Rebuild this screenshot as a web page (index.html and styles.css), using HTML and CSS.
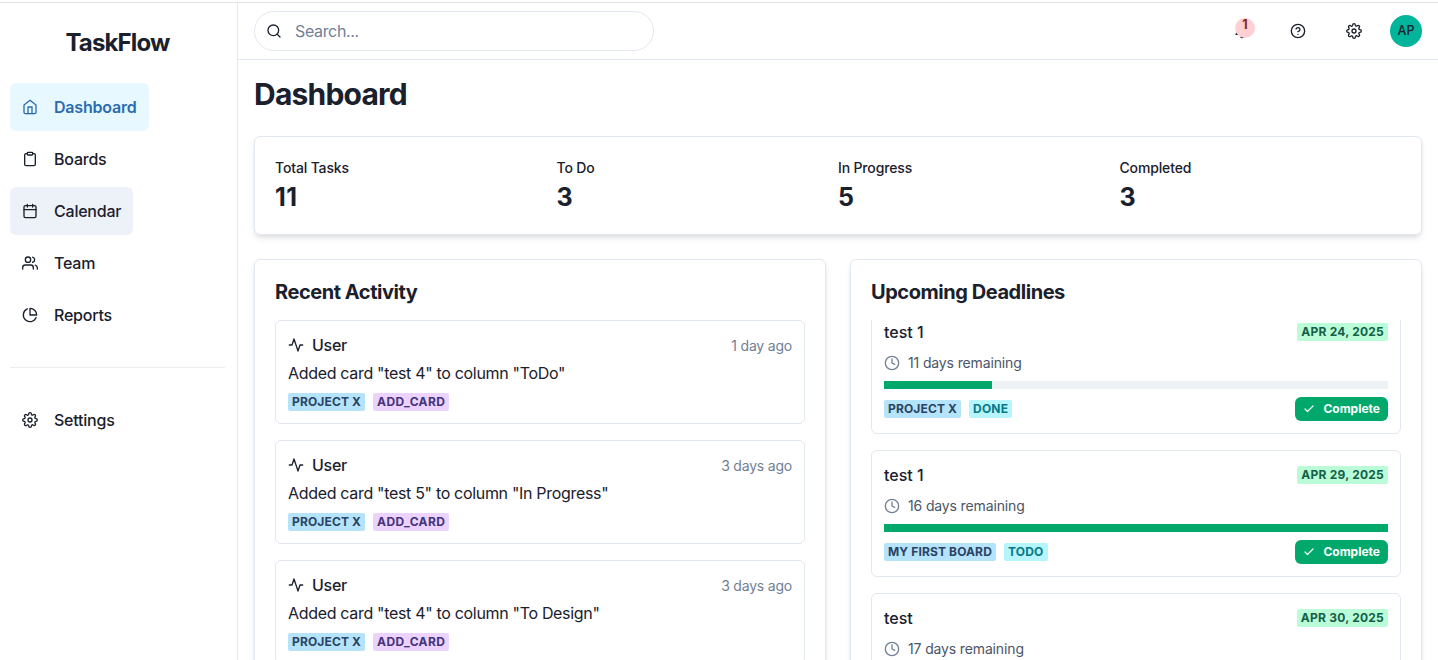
FILE: index.html
```html
<!DOCTYPE html>
<html lang="en">
<head>
<meta charset="utf-8">
<title>TaskFlow</title>
<link rel="stylesheet" href="styles.css">
</head>
<body>
<svg class="sprite" aria-hidden="true">
  <symbol id="home" viewBox="0 0 24 24"><path d="M3 9l9-7 9 7v11a2 2 0 0 1-2 2H5a2 2 0 0 1-2-2z"/><path d="M9 22V12h6v10"/></symbol>
  <symbol id="clipboard" viewBox="0 0 24 24"><path d="M16 4h2a2 2 0 0 1 2 2v14a2 2 0 0 1-2 2H6a2 2 0 0 1-2-2V6a2 2 0 0 1 2-2h2"/><rect x="8" y="2" width="8" height="4" rx="1"/></symbol>
  <symbol id="calendar" viewBox="0 0 24 24"><rect x="3" y="4" width="18" height="18" rx="2"/><path d="M16 2v4M8 2v4M3 10h18"/></symbol>
  <symbol id="users" viewBox="0 0 24 24"><path d="M17 21v-2a4 4 0 0 0-4-4H5a4 4 0 0 0-4 4v2"/><circle cx="9" cy="7" r="4"/><path d="M23 21v-2a4 4 0 0 0-3-3.87M16 3.13a4 4 0 0 1 0 7.75"/></symbol>
  <symbol id="pie" viewBox="0 0 24 24"><path d="M21.21 15.89A10 10 0 1 1 8 2.83"/><path d="M22 12A10 10 0 0 0 12 2v10z"/></symbol>
  <symbol id="gear" viewBox="0 0 24 24"><circle cx="12" cy="12" r="3"/><path d="M19.4 15a1.65 1.65 0 0 0 .33 1.82l.06.06a2 2 0 0 1 0 2.83 2 2 0 0 1-2.83 0l-.06-.06a1.65 1.65 0 0 0-1.82-.33 1.65 1.65 0 0 0-1 1.51V21a2 2 0 0 1-2 2 2 2 0 0 1-2-2v-.09A1.65 1.65 0 0 0 9 19.4a1.65 1.65 0 0 0-1.82.33l-.06.06a2 2 0 0 1-2.83 0 2 2 0 0 1 0-2.83l.06-.06a1.65 1.65 0 0 0 .33-1.82 1.65 1.65 0 0 0-1.51-1H3a2 2 0 0 1-2-2 2 2 0 0 1 2-2h.09A1.65 1.65 0 0 0 4.6 9a1.65 1.65 0 0 0-.33-1.82l-.06-.06a2 2 0 0 1 0-2.83 2 2 0 0 1 2.83 0l.06.06a1.65 1.65 0 0 0 1.82.33H9a1.65 1.65 0 0 0 1-1.51V3a2 2 0 0 1 2-2 2 2 0 0 1 2 2v.09a1.65 1.65 0 0 0 1 1.51 1.65 1.65 0 0 0 1.82-.33l.06-.06a2 2 0 0 1 2.83 0 2 2 0 0 1 0 2.83l-.06.06a1.65 1.65 0 0 0-.33 1.82V9a1.65 1.65 0 0 0 1.51 1H21a2 2 0 0 1 2 2 2 2 0 0 1-2 2h-.09a1.65 1.65 0 0 0-1.51 1z"/></symbol>
  <symbol id="search" viewBox="0 0 24 24"><circle cx="11" cy="11" r="8"/><path d="M21 21l-4.35-4.35"/></symbol>
  <symbol id="bell" viewBox="0 0 24 24"><path d="M18 8A6 6 0 0 0 6 8c0 7-3 9-3 9h18s-3-2-3-9"/><path d="M13.73 21a2 2 0 0 1-3.46 0"/></symbol>
  <symbol id="help" viewBox="0 0 24 24"><circle cx="12" cy="12" r="10"/><path d="M9.09 9a3 3 0 0 1 5.83 1c0 2-3 3-3 3M12 17h.01"/></symbol>
  <symbol id="activity" viewBox="0 0 24 24"><path d="M22 12h-4l-3 9L9 3l-3 9H2"/></symbol>
  <symbol id="clock" viewBox="0 0 24 24"><circle cx="12" cy="12" r="10"/><path d="M12 6v6l4 2"/></symbol>
  <symbol id="check" viewBox="0 0 24 24"><path d="M20 6L9 17l-5-5"/></symbol>
</svg>
<div class="app">
  <aside class="sidebar">
    <div class="brand">TaskFlow</div>
    <nav class="nav">
      <a class="nav-item active"><svg class="icon"><use href="#home"/></svg>Dashboard</a>
      <a class="nav-item"><svg class="icon"><use href="#clipboard"/></svg>Boards</a>
      <a class="nav-item hovered"><svg class="icon"><use href="#calendar"/></svg>Calendar</a>
      <a class="nav-item"><svg class="icon"><use href="#users"/></svg>Team</a>
      <a class="nav-item"><svg class="icon"><use href="#pie"/></svg>Reports</a>
    </nav>
    <hr class="divider">
    <a class="nav-item"><svg class="icon"><use href="#gear"/></svg>Settings</a>
  </aside>
  <div class="main">
    <header class="topbar">
      <div class="search"><svg class="icon"><use href="#search"/></svg><span>Search...</span></div>
      <div class="actions">
        <div class="action bell"><svg class="icon"><use href="#bell"/></svg><span class="count">1</span></div>
        <div class="action"><svg class="icon"><use href="#help"/></svg></div>
        <div class="action"><svg class="icon"><use href="#gear"/></svg></div>
        <div class="avatar">AP</div>
      </div>
    </header>
    <main class="content">
      <h1 class="page-title">Dashboard</h1>
      <section class="stats card">
        <div><div class="stat-label">Total Tasks</div><div class="stat-value">11</div></div>
        <div><div class="stat-label">To Do</div><div class="stat-value">3</div></div>
        <div><div class="stat-label">In Progress</div><div class="stat-value">5</div></div>
        <div><div class="stat-label">Completed</div><div class="stat-value">3</div></div>
      </section>
      <div class="columns">
        <section class="panel card">
          <h2 class="panel-title">Recent Activity</h2>
          <div class="list">
            <article class="item">
              <div class="row"><div class="user"><svg class="icon"><use href="#activity"/></svg>User</div><span class="time">1 day ago</span></div>
              <p class="text">Added card "test 4" to column "ToDo"</p>
              <div class="badges"><span class="badge blue">Project X</span><span class="badge purple">ADD_CARD</span></div>
            </article>
            <article class="item">
              <div class="row"><div class="user"><svg class="icon"><use href="#activity"/></svg>User</div><span class="time">3 days ago</span></div>
              <p class="text">Added card "test 5" to column "In Progress"</p>
              <div class="badges"><span class="badge blue">Project X</span><span class="badge purple">ADD_CARD</span></div>
            </article>
            <article class="item">
              <div class="row"><div class="user"><svg class="icon"><use href="#activity"/></svg>User</div><span class="time">3 days ago</span></div>
              <p class="text">Added card "test 4" to column "To Design"</p>
              <div class="badges"><span class="badge blue">Project X</span><span class="badge purple">ADD_CARD</span></div>
            </article>
          </div>
        </section>
        <section class="panel card">
          <h2 class="panel-title">Upcoming Deadlines</h2>
          <div class="list">
            <article class="item deadline scrolled">
              <div class="row"><span class="name">test 1</span><span class="badge green">Apr 24, 2025</span></div>
              <div class="remaining"><svg class="icon"><use href="#clock"/></svg>11 days remaining</div>
              <div class="track"><div class="fill" style="width:21.43%"></div></div>
              <div class="row"><div class="badges"><span class="badge blue">Project X</span><span class="badge cyan">Done</span></div><button class="complete"><svg class="icon"><use href="#check"/></svg>Complete</button></div>
            </article>
            <article class="item deadline">
              <div class="row"><span class="name">test 1</span><span class="badge green">Apr 29, 2025</span></div>
              <div class="remaining"><svg class="icon"><use href="#clock"/></svg>16 days remaining</div>
              <div class="track"><div class="fill" style="width:100%"></div></div>
              <div class="row"><div class="badges"><span class="badge blue">My First Board</span><span class="badge cyan">ToDo</span></div><button class="complete"><svg class="icon"><use href="#check"/></svg>Complete</button></div>
            </article>
            <article class="item deadline">
              <div class="row"><span class="name">test</span><span class="badge green">Apr 30, 2025</span></div>
              <div class="remaining"><svg class="icon"><use href="#clock"/></svg>17 days remaining</div>
            </article>
          </div>
        </section>
      </div>
    </main>
  </div>
</div>
</body>
</html>
```
FILE: styles.css
```css
* { box-sizing: border-box; margin: 0; padding: 0; }
html, body { height: 100%; overflow: hidden; }
body {
  padding-top: 2px;
  font-family: Inter, "Liberation Sans", sans-serif;
  font-size: 16px;
  line-height: 24px;
  color: #1a202c;
  background: #fff;
}
.sprite { position: absolute; width: 0; height: 0; }
.icon {
  width: 16px;
  height: 16px;
  flex: none;
  fill: none;
  stroke: currentColor;
  stroke-width: 2;
  stroke-linecap: round;
  stroke-linejoin: round;
}
.app { display: flex; height: 658px; border-top: 1px solid #e0e2e5; overflow: hidden; }

.sidebar { width: 238px; flex: none; padding: 21px 12px 0 10px; border-right: 1px solid #e2e8f0; }
.brand { height: 36px; margin-bottom: 23px; text-align: center; font-size: 24px; line-height: 37px; font-weight: 700; letter-spacing: -.85px; }
.nav { display: flex; flex-direction: column; align-items: flex-start; gap: 4px; }
.nav-item { display: inline-flex; align-items: center; gap: 16px; height: 48px; padding: 0 12px; border-radius: 6px; font-weight: 500; letter-spacing: -.22px; }
.active { background: #e8f8ff; color: #2b6cb0; font-weight: 600; letter-spacing: -.2px; }
.hovered { background: #edf2f9; }
.divider { margin: 28px 0; border: 0; border-top: 1px solid #ececee; }

.main { flex: 1; min-width: 0; }
.topbar { display: flex; align-items: center; justify-content: space-between; height: 57px; padding: 0 16px; border-bottom: 1px solid #e2e8f0; }
.search { display: flex; align-items: center; gap: 13px; width: 400px; height: 40px; padding: 0 11px; border: 1px solid #e2e8f0; border-radius: 20px; }
.search span { color: #718096; letter-spacing: -.35px; }
.actions { display: flex; align-items: center; gap: 16px; }
.action { display: flex; align-items: center; justify-content: center; width: 40px; height: 40px; }
.bell { position: relative; }
.count { position: absolute; top: 7px; right: 7px; width: 20px; height: 20px; border-radius: 50%; background: #fed0d3; color: #822727; font-size: 12.5px; line-height: 14px; font-weight: 700; text-align: center; }
.avatar { width: 32px; height: 32px; border-radius: 50%; background: #00b59c; font-size: 12.5px; line-height: 32px; font-weight: 500; text-align: center; }

.content { padding: 16px; }
.page-title { height: 36px; margin-bottom: 24px; font-size: 30px; line-height: 37px; font-weight: 700; letter-spacing: -.78px; }
.card { border: 1px solid #e2e8f0; border-radius: 6px; background: #fff; box-shadow: 0 4px 6px -1px rgba(0,0,0,.1), 0 2px 4px -1px rgba(0,0,0,.06); }
.stats { display: grid; grid-template-columns: repeat(4, 1fr); height: 99px; padding: 20px; margin-bottom: 24px; }
.stat-label { font-size: 14px; line-height: 21px; font-weight: 500; letter-spacing: -.15px; }
.stat-value { font-size: 25px; line-height: 38px; font-weight: 700; letter-spacing: .4px; }
.columns { display: grid; grid-template-columns: 1fr 1fr; gap: 24px; }
.panel { height: 500px; padding: 20px; }
.panel-title { font-size: 20px; line-height: 24px; font-weight: 700; letter-spacing: -.45px; margin-bottom: 16px; }
.list { display: flex; flex-direction: column; gap: 16px; overflow: hidden; }
.item { padding: 12px; border: 1px solid #e2e8f0; border-radius: 6px; }
.row { display: flex; align-items: center; justify-content: space-between; height: 24px; }
.user { display: flex; align-items: center; gap: 8px; font-weight: 500; letter-spacing: -.25px; }
.time { font-size: 14px; line-height: 22px; padding-top: 1px; color: #718096; letter-spacing: -.2px; }
.text { margin: 4px 0 8px; letter-spacing: -.32px; }
.badges { display: flex; gap: 8px; }
.badge { height: 18px; padding: 0 4px; border-radius: 2px; font-size: 12px; line-height: 18px; font-weight: 700; text-transform: uppercase; letter-spacing: .14px; }
.blue { background: #b5e3fa; color: #2a4365; }
.purple { background: #ebd2ff; color: #44337a; letter-spacing: .38px; }
.cyan { background: #b5f5fb; color: #087889; letter-spacing: .2px; }
.green { background: #b9fcd7; color: #145f48; letter-spacing: .24px; }
.deadline { height: 127px; display: flex; flex-direction: column; gap: 8px; flex: none; }
.scrolled { margin-top: -13px; }
.name { font-weight: 500; }
.remaining { display: flex; align-items: center; gap: 8px; height: 21px; font-size: 14px; color: #4a5568; letter-spacing: -.14px; }
.remaining .icon { color: #718096; }
.track { height: 8px; flex: none; background: #edf2f7; }
.fill { height: 8px; background: #00a96b; }
.complete { display: flex; align-items: center; gap: 8px; height: 24px; padding: 0 8px; border: 0; border-radius: 6px; background: #00a96b; color: #fff; font: 700 12px/24px Inter, sans-serif; }
.complete .icon { width: 12px; height: 12px; stroke-width: 2.4; }
```
